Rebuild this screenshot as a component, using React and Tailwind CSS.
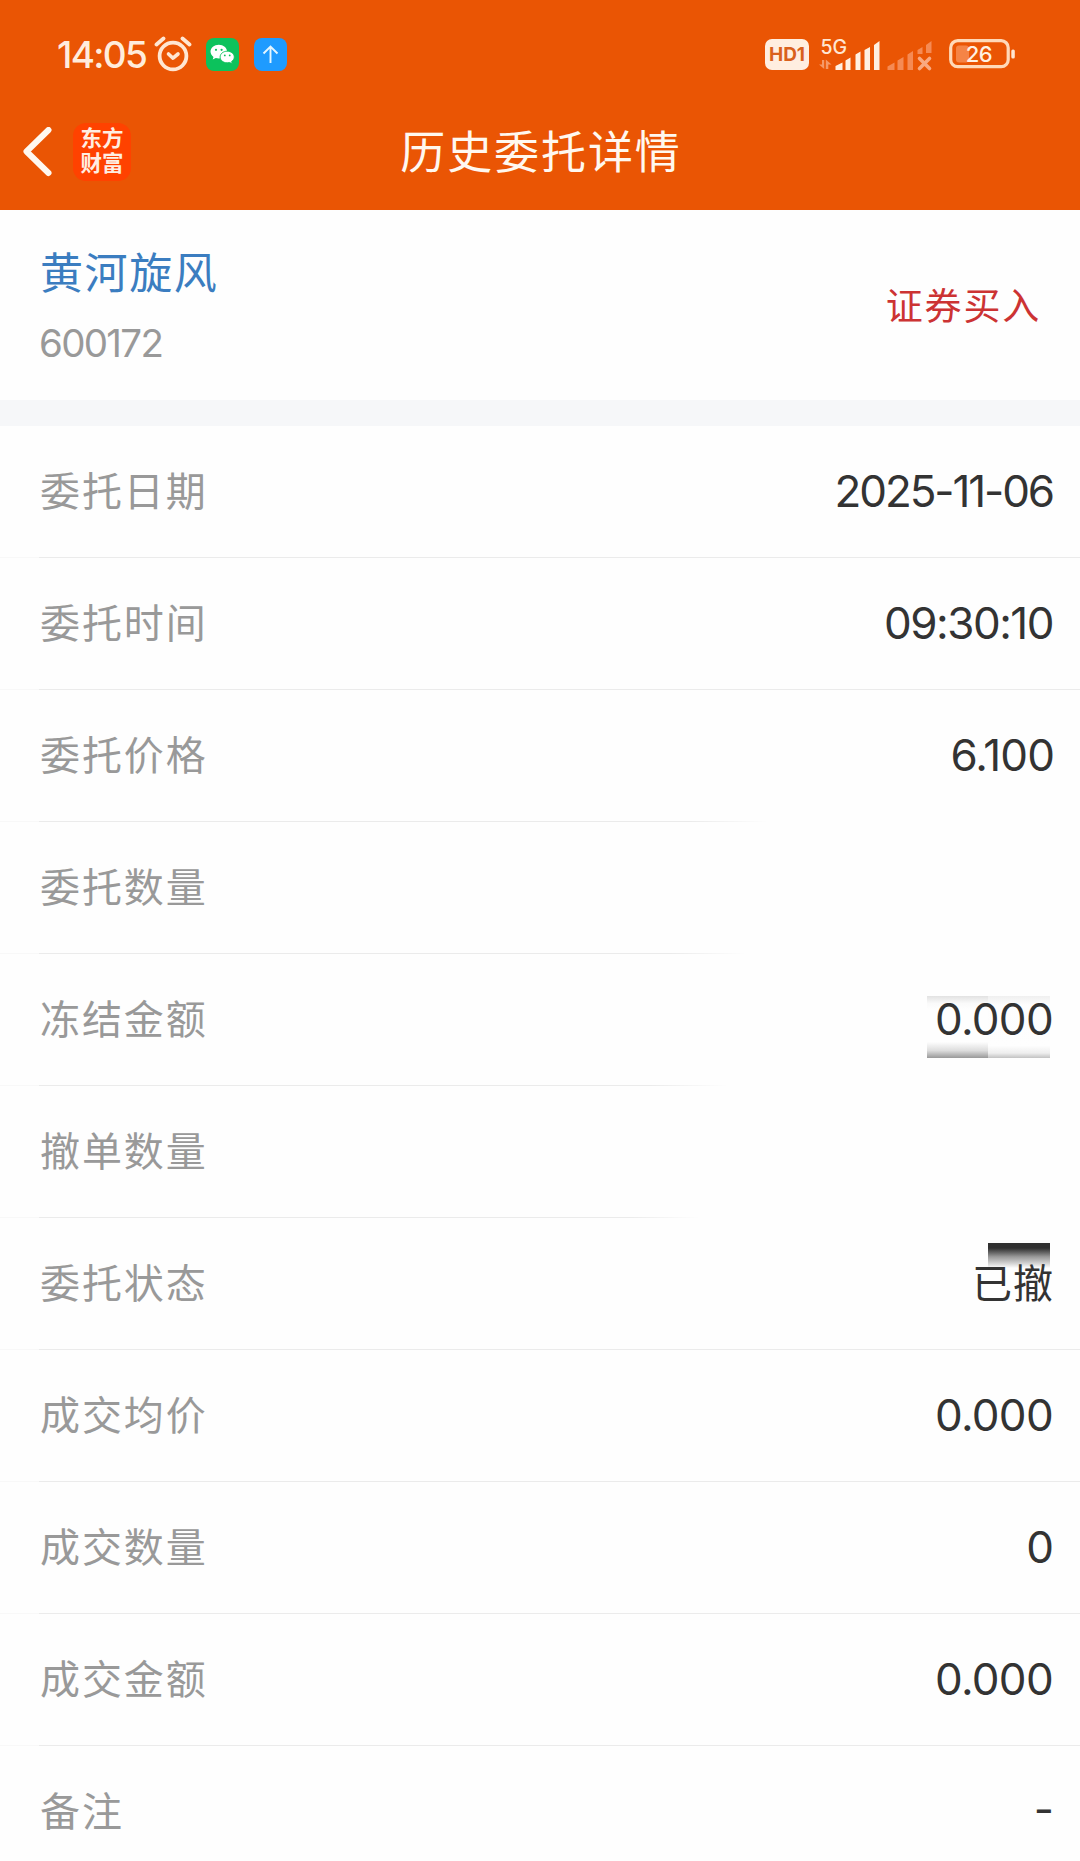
import { clsx } from 'clsx';

const rows = [
  { label: '委托日期', value: '2025-11-06', spacing: 'tracking-[-2.1px] mr-px' },
  { label: '委托时间', value: '09:30:10', spacing: 'tracking-[-1.5px] mr-px' },
  { label: '委托价格', value: '6.100', spacing: 'tracking-[-0.9px]', fade: 'from-[#ebebeb] from-[650px] to-transparent to-[730px]' },
  { label: '委托数量', value: '', fade: 'from-[#ebebeb] from-[630px] to-transparent to-[706px]' },
  { label: '冻结金额', value: '0.000', spacing: 'tracking-[-0.7px] mr-px', smudge: 'frozen', fade: 'from-[#ebebeb] from-[611px] to-transparent to-[688px]' },
  { label: '撤单数量', value: '', fade: 'from-[#ebebeb] from-[590px] to-transparent to-[660px]' },
  { label: '委托状态', value: '已撤', smudge: 'state', cjk: true },
  { label: '成交均价', value: '0.000', spacing: 'tracking-[-0.7px] mr-px' },
  { label: '成交数量', value: '0' },
  { label: '成交金额', value: '0.000', spacing: 'tracking-[-0.7px] mr-px' },
  { label: '备注', value: '-', spacing: '-mt-[5px]' },
];

const AlarmIcon = () => (
  <svg width="38" height="36" viewBox="0 0 38 36" fill="none" stroke="#ffe6d2" strokeLinecap="round" strokeLinejoin="round">
    <circle cx="19" cy="20" r="13.4" strokeWidth="3.8" />
    <path d="M14.5 18l4.5 4.2 5-4.2" strokeWidth="3.6" />
    <path d="M2.5 8.500l7-6M35.500 8.500l-7-6" strokeWidth="3.8" />
  </svg>
);

const WechatIcon = () => (
  <svg width="33" height="33" viewBox="0 0 33 33">
    <rect width="33" height="33" rx="8" fill="#0cc25c" />
    <path d="M12.800 6.800c-4.600 0-8.300 3-8.300 6.800 0 2.200 1.200 4.100 3 5.300l-.8 2.600 3.100-1.500c1 .3 2 .4 3 .4 4.600 0 8.300-3 8.300-6.800s-3.700-6.800-8.300-6.800z" fill="#fff" />
    <path d="M21.200 13.200c-4 0-7.100 2.600-7.100 5.800s3.100 5.800 7.100 5.800c.8 0 1.600-.1 2.400-.3l2.700 1.300-.7-2.300c1.600-1.100 2.700-2.700 2.700-4.500 0-3.200-3.200-5.800-7.100-5.800z" fill="#fff" stroke="#0cc25c" strokeWidth="0.9" />
    <g fill="#0cc25c">
      <circle cx="10" cy="11.800" r="1.100" />
      <circle cx="15.600" cy="11.800" r="1.100" />
      <circle cx="18.800" cy="17.400" r="0.900" />
      <circle cx="23.700" cy="17.400" r="0.900" />
    </g>
  </svg>
);

const UploadIcon = () => (
  <svg width="33" height="33" viewBox="0 0 33 33" fill="none">
    <rect width="33" height="33" rx="8" fill="#1e9bff" />
    <path d="M16.500 25V9M9.500 15.500l7-7 7 7" stroke="#e4f6ff" strokeWidth="1.900" />
  </svg>
);

const SignalIcons = () => (
  <svg className="-mt-[9px]" width="116" height="43" viewBox="0 -9 116 43">
    <text x="1.500" y="14.500" fontFamily="Inter, sans-serif" fontSize="19.500" fontWeight="500" fill="#ffe6d2">5G</text>
    <path d="M3 21h2.200v9L0 25.500h3zM8.300 30H6.800v-9.500l5.700 5H9.300V30z" fill="#f59a68" />
    <path d="M16.500 31v-4l7-3.500V31zM26.500 31v-9.500l5-3V31zM36.500 31V15.500l5-3V31zM45.500 31V11l5.500-3v23zM55 31V6l5.500-4v29z" fill="#fff0e2" />
    <path d="M68.500 31v-3.500l7-4V31zM78.500 31v-9.500l6-3.500v13zM88.500 31V15.500l5.500-3.500v19zM98.500 15v-4l5-3v7zM107 14V6l5.500-4v12z" fill="#f58a54" />
    <path d="M100.500 19.500l10 10M110.500 19.500l-10 10" stroke="#f9a981" strokeWidth="3.600" strokeLinecap="round" />
  </svg>
);

const BatteryIcon = () => (
  <svg width="67" height="30" viewBox="0 0 67 30">
    <rect x="1.700" y="1.700" width="57.500" height="26" rx="7" fill="none" stroke="#ffd9b8" strokeWidth="3.200" />
    <rect x="7" y="6.500" width="13" height="17" rx="3" fill="#f58446" />
    <rect x="62.300" y="10.500" width="3.500" height="9" rx="1.500" fill="#ffe6d2" />
    <text x="30" y="23" textAnchor="middle" fontFamily="Inter, sans-serif" fontSize="22" fontWeight="500" letterSpacing="-0.5" fill="#fff0e2">26</text>
  </svg>
);

const StatusBar = () => (
  <div className="h-[105px] pt-[36px] pl-[57px] pr-[64px] flex justify-between items-start text-[#ffecdc]">
    <div className="flex items-start">
      <span className="w-[97px] font-medium text-[37px] leading-[38px] tracking-[-1.7px] whitespace-nowrap">14:05</span>
      <AlarmIcon />
      <div className="flex gap-[15px] pl-[14px] pt-[2px]">
        <WechatIcon />
        <UploadIcon />
      </div>
    </div>
    <div className="flex items-start pt-[3px]">
      <span className="w-[44px] h-[31px] mr-[10px] rounded-[7px] bg-[#ffeee0] text-[#d9601c] text-[19px] leading-[31px] font-bold text-center">HD1</span>
      <SignalIcons />
      <div className="ml-[14px]">
        <BatteryIcon />
      </div>
    </div>
  </div>
);

const Header = () => (
  <header className="h-[210px] bg-[#ea5504]">
    <StatusBar />
    <div className="grid grid-cols-[1fr_auto_1fr] items-center h-[94px]">
      <div className="flex items-center pl-[21px]">
        <svg width="32" height="50" viewBox="0 0 32 50" fill="none">
          <path d="M27.500 3L5.500 24.500 27.500 46" stroke="#fff8ef" strokeWidth="6" strokeLinecap="round" strokeLinejoin="round" />
        </svg>
        <div className="w-[58px] h-[58px] ml-[20px] rounded-[13px] bg-[#ff4200] text-[#ffeee2] text-[21.500px] leading-[25px] font-bold flex flex-col items-center justify-center pb-[3px]">
          <span>东方</span>
          <span>财富</span>
        </div>
      </div>
      <h1 className="pt-[2px] pl-[2px] text-[45px] leading-[60px] tracking-[1.900px] text-[#fff8ef]">历史委托详情</h1>
      <div />
    </div>
  </header>
);

const Smudge = ({ type }) => {
  if (type === 'frozen') {
    return (
      <div className="absolute left-[927px] top-[42px] w-[123px] h-[62px] flex">
        <div className="w-[61px] bg-[linear-gradient(#e2e2e2,#fafafa_12%,#fefefe_22%,#fefefe_74%,#dddddd_88%,#999999)]" />
        <div className="w-[62px] bg-[linear-gradient(#f0f0f0,#fdfdfd_14%,#fefefe_80%,#eeeeee_92%,#c2c2c2)]" />
      </div>
    );
  }
  return (
    <div className="absolute left-[988px] top-[25px] w-[62px] h-[25px] bg-linear-to-b from-[#303030] from-20% via-[#999] via-55% to-[#fefefe]" />
  );
};

const DetailRow = ({ row }) => (
  <div className="relative h-[132px] flex flex-col">
    {row.smudge && <Smudge type={row.smudge} />}
    <div className="relative h-[131px] pl-[40px] pr-[26px] flex items-center justify-between">
      <span className="text-[40px] tracking-[1.900px] text-[#999]">{row.label}</span>
      <span className={clsx('text-[#333]', row.cjk ? 'text-[40px] tracking-[1px]' : 'pb-px text-[44px] font-[380]', row.spacing)}>
        {row.value}
      </span>
    </div>
    <div className="flex h-px">
      <div className="w-[39px] bg-[#f8f8f8]" />
      <div className={clsx('flex-1', row.fade ? ['bg-linear-to-r', row.fade] : 'bg-[#ebebeb]')} />
    </div>
  </div>
);

const App = () => {
  return (
    <div className="w-[1080px] h-[1861px] overflow-hidden bg-[#fefefe] font-[Inter,'Noto_Sans_CJK_SC',sans-serif]">
      <Header />

      {/* Stock summary */}
      <section className="h-[190px] pl-[40px] pr-[39px] flex justify-between">
        <div className="pt-[33px]">
          <h2 className="text-[43px] leading-[60px] tracking-[1.600px] text-[#3b7dc0]">黄河旋风</h2>
          <p className="mt-[15px] -ml-px text-[38.500px] leading-[50px] font-[380] tracking-[-1.700px] text-[#999]">600172</p>
        </div>
        <span className="pt-[72px] text-[37px] leading-[50px] tracking-[1.800px] text-[#cc3333]">证券买入</span>
      </section>
      <div className="h-[26px] bg-[#f6f7f9]" />

      {/* Order details */}
      <section>
        {rows.map((row) => (
          <DetailRow key={row.label} row={row} />
        ))}
      </section>
    </div>
  );
};

export default App;
